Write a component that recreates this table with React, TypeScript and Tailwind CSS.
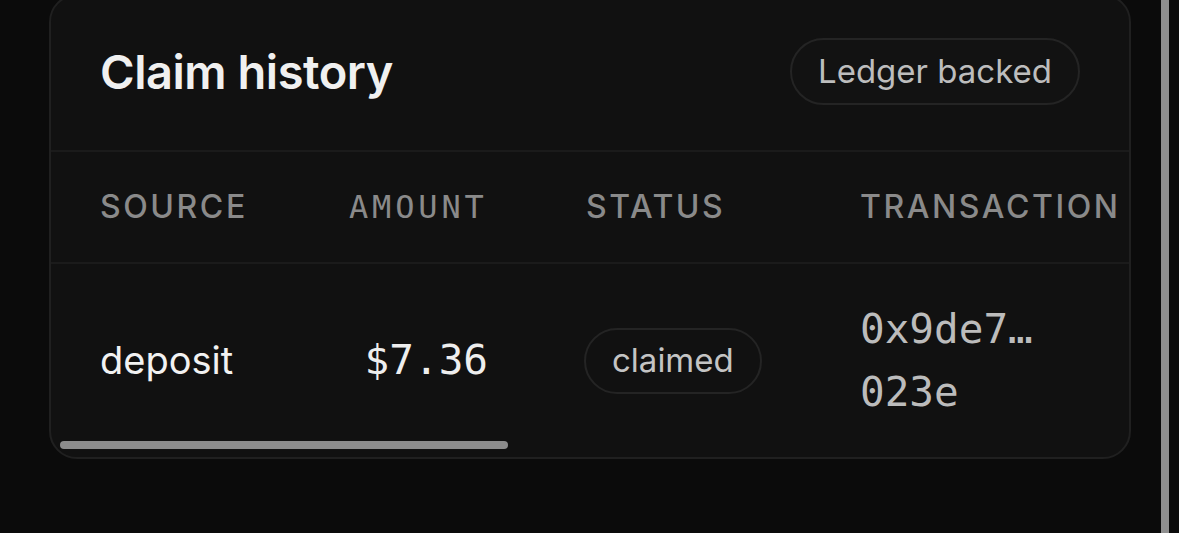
import React from "react";

export default function App() {
  return (
    <div className="flex h-[533px] w-[1179px] overflow-hidden bg-[#0b0b0b] font-['Inter',sans-serif]">
      <div className="w-[49px] shrink-0" />
      <div className="relative -mt-[6px] flex h-[465px] w-[1082px] shrink-0 flex-col overflow-hidden rounded-[28px] border-2 border-[#202020] bg-[#111111]">
        <div className="flex h-[156px] shrink-0 items-center justify-between border-b-2 border-[#1b1b1b] pb-[3px] pl-[49px] pr-[49px]">
          <h2 className="text-[47px] font-semibold leading-none tracking-[-0.01em] text-[#f0f0f0]">Claim history</h2>
          <span className="flex h-[67px] items-center rounded-full border-2 border-[#242424] bg-[#121212] px-[26px] text-[33px] text-[#bdbdbd]">
            Ledger backed
          </span>
        </div>
        <div className="flex h-[112px] shrink-0 items-center border-b-2 border-[#1b1b1b] pl-[49px] text-[32px] font-medium uppercase tracking-[0.08em] text-[#8a8a8a]">
          <div className="w-[249px] shrink-0">Source</div>
          <div className="w-[142px] shrink-0 font-['DejaVu_Sans_Mono',monospace] text-[32px] font-normal tracking-[0.12em]">Amount</div>
          <div className="w-[369px] shrink-0 pl-[95px]">Status</div>
          <div className="w-[320px] shrink-0">Transaction</div>
          <div className="w-[300px] shrink-0" />
        </div>
        <div className="flex flex-1 items-center pl-[49px]">
          <div className="w-[249px] shrink-0 text-[38px] text-[#f2f2f2]">deposit</div>
          <div className="w-[139px] shrink-0 text-right font-['DejaVu_Sans_Mono',monospace] text-[41px] text-[#eeeeee]">$7.36</div>
          <div className="w-[372px] shrink-0 pl-[96px]">
            <span className="inline-flex h-[66px] items-center rounded-full border-2 border-[#242424] px-[26px] text-[33px] text-[#c4c4c4]">
              claimed
            </span>
          </div>
          <div className="w-[320px] shrink-0 font-['DejaVu_Sans_Mono',monospace] text-[41px] leading-[63px] text-[#bcbcbc]">
            <div>0x9de7…</div>
            <div>023e</div>
          </div>
          <div className="w-[300px] shrink-0" />
        </div>
        <div className="absolute bottom-[8px] left-[9px] h-[8px] w-[448px] rounded-full bg-[#8c8c8c]" />
      </div>
      <div className="w-[30px] shrink-0" />
      <div className="h-full w-[8px] shrink-0 bg-[#8f8f8f]" />
    </div>
  );
}
